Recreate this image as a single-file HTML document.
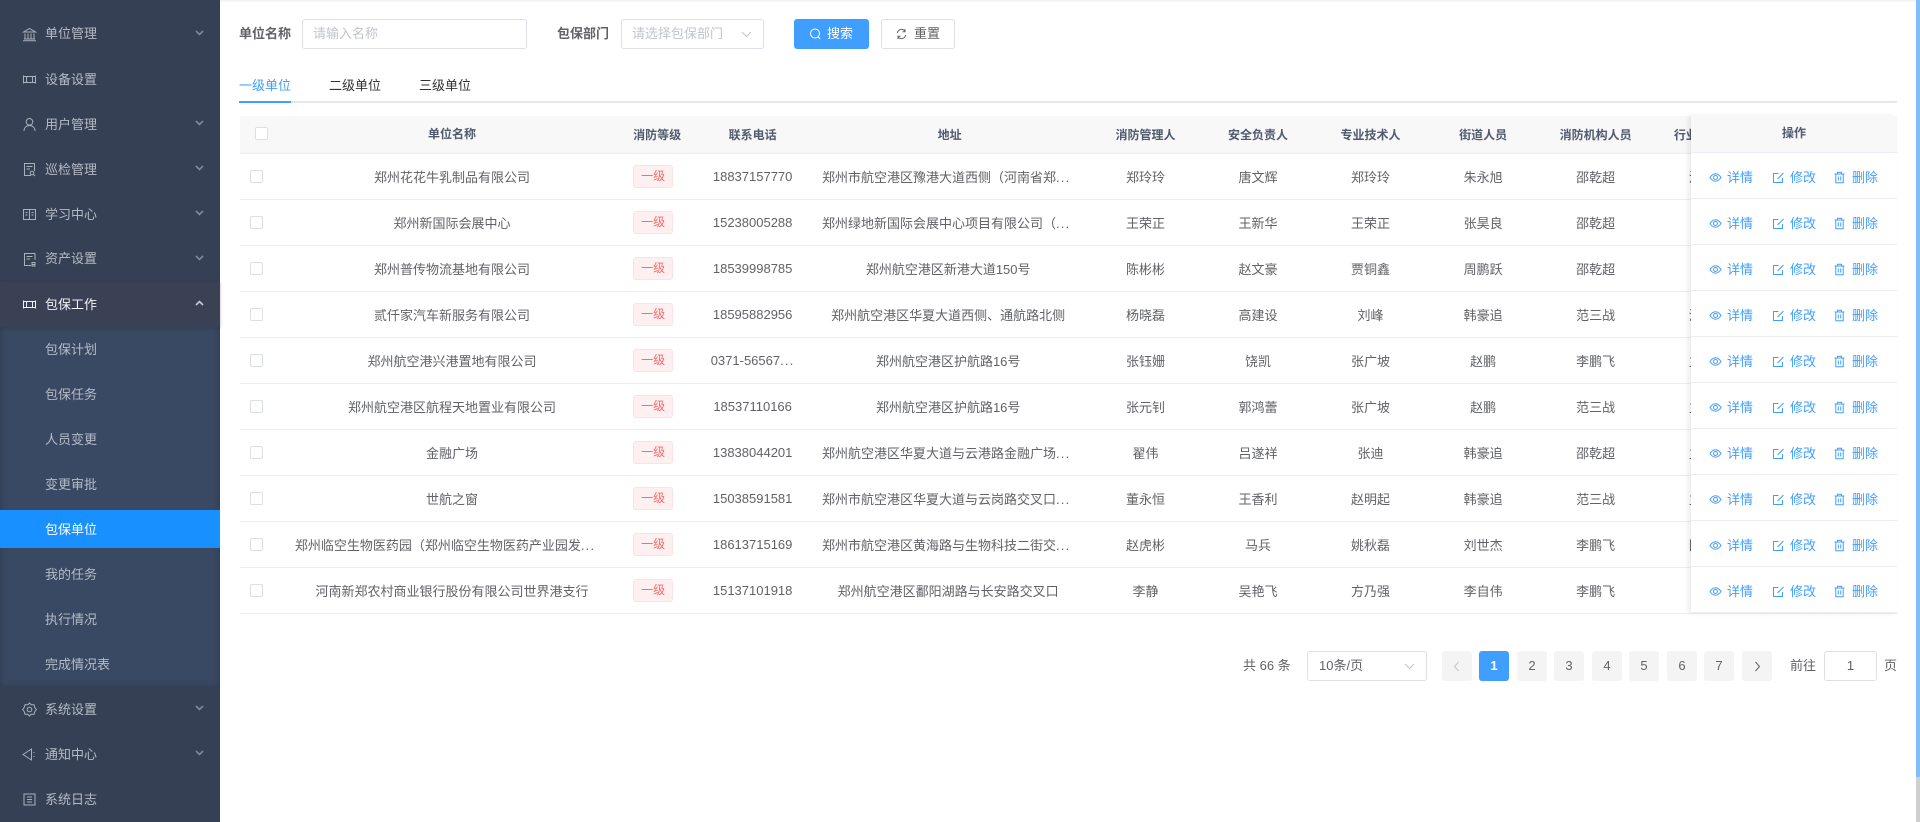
<!DOCTYPE html>
<html lang="zh"><head><meta charset="utf-8"><title>包保单位</title>
<style>
*{box-sizing:border-box;margin:0;padding:0}
html,body{width:1920px;height:822px;overflow:hidden;background:#fff;font-family:"Liberation Sans","Noto Sans CJK SC",sans-serif;font-size:13px;color:#606266;text-spacing-trim:space-all}
.abs,.m,.s{position:absolute}
#side{position:absolute;left:0;top:0;width:220px;height:822px;background:#364054}
#sub{position:absolute;left:0;top:327px;width:220px;height:360px;background:#3a4963;box-shadow:inset 0 0 7px rgba(20,25,40,.35)}
#cur{position:absolute;left:0;top:282px;width:220px;height:45px;background:#3a4154;box-shadow:0 1px 3px rgba(20,25,40,.3)}
#act{position:absolute;left:0;top:510px;width:220px;height:38px;background:#1890ff}
.m,.s{left:45px;height:20px;line-height:20px;color:#b4bbc6;font-size:13px;white-space:nowrap;margin-top:1px}
.ic{position:absolute;left:22px;width:15px;height:15px;fill:none;stroke:#a9b1bd;stroke-width:1}
.ch{position:absolute;left:195px;width:9px;height:6px;fill:none;stroke:#7f8898;stroke-width:1.6}
#top{position:absolute;left:220px;top:0;width:1696px;height:3px;background:linear-gradient(#f1f1f1,#fff)}
.lb{position:absolute;top:24px;height:20px;line-height:20px;font-weight:700;color:#606266}
.inp{position:absolute;top:19px;height:30px;border:1px solid #dcdfe6;border-radius:3px;background:#fff;line-height:28px;color:#c0c4cc;padding-left:10px}
.btn{position:absolute;top:19px;height:30px;border-radius:3px;line-height:28px}
.tab{position:absolute;top:76px;height:20px;line-height:20px;color:#303133;white-space:nowrap}
table{position:absolute;left:240px;top:116px;width:1657px;border-collapse:collapse;table-layout:fixed}
th{height:37px;background:#f8f8f9;font-size:12px;font-weight:700;color:#515a6e;text-align:center;border-bottom:1px solid #ebeef5;white-space:nowrap;overflow:hidden;padding:0}
td{height:46px;text-align:center;border-bottom:1px solid #ebeef5;white-space:nowrap;overflow:hidden;padding:0;color:#606266}
td.ad{padding-right:7px}
td.ad3{padding-right:3px}
td.nm{padding-right:14px}
b{font-weight:400;letter-spacing:1.2px}
.cb{display:block;width:13px;height:13px;border:1px solid #dcdfe6;border-radius:2px;background:#fff}
.tag{display:inline-block;width:40px;height:23px;line-height:21px;border:1px solid #fde2e2;background:#fef0f0;color:#f56c6c;border-radius:3px;font-size:12px;margin-left:-6px}
#fx{position:absolute;left:1691px;top:116px;width:206px;height:497px;background:#fff;box-shadow:-3px 0 5px rgba(0,0,0,.08)}
#fxh{height:37px;line-height:34px;text-align:center;background:#f8f8f9;font-size:12px;font-weight:700;color:#515a6e;border-bottom:1px solid #ebeef5}
.r{position:relative;height:46px;border-bottom:1px solid #ebeef5;color:#409eff}
.r span{position:absolute;top:16px;height:18px;line-height:18px;white-space:nowrap}
.r svg{position:absolute;top:18px;width:13px;height:13px;fill:none;stroke:#409eff;stroke-width:1}
.pg{position:absolute;top:651px;width:30px;height:30px;line-height:30px;text-align:center;background:#f4f4f5;border-radius:3px;color:#606266}
.pt{position:absolute;top:656px;height:20px;line-height:20px;color:#606266;white-space:nowrap}
</style></head><body>
<svg width="0" height="0" style="position:absolute">
<symbol id="eye" viewBox="0 0 13 13"><path d="M1 6.500C3 3.500 4.600 2.800 6.500 2.800S10 3.500 12 6.500C10 9.500 8.400 10.200 6.500 10.200S3 9.500 1 6.500Z"/><circle cx="6.500" cy="6.500" r="2"/></symbol>
<symbol id="edit" viewBox="0 0 13 13"><path d="M10.500 7V11.500H1.500V2.500H6.500"/><path d="M5.500 8L11.500 2"/></symbol>
<symbol id="del" viewBox="0 0 13 13"><path d="M1.500 3H11.500M4.500 3V1.200H8.500V3M2.800 3V11.800H10.200V3M5.300 5.500V9.500M7.700 5.500V9.500"/></symbol>
</svg>
<div id="top"></div>
<div id="side">
<div id="cur"></div><div id="sub"></div><div id="act"></div>
<svg class="ic" style="top:27px" viewBox="0 0 15 15"><path d="M1.500 5L7.500 1.500L13.500 5ZM3 6.500V11.500M6 6.500V11.500M9 6.500V11.500M12 6.500V11.500M2 12H13M1 13.800H14"/></svg>
<div class="m" style="top:23px">单位管理</div><svg class="ch" style="top:30px" viewBox="0 0 9 6"><path d="M1 1L4.500 4.500L8 1"/></svg>
<svg class="ic" style="top:72px" viewBox="0 0 15 15"><path d="M1.500 3.500V11.500M13.500 3.500V11.500M1.500 4.500H13.500M1.500 10.500H13.500M4.500 4.500V10.500M10.500 4.500V10.500"/></svg>
<div class="m" style="top:69px">设备设置</div>
<svg class="ic" style="top:117px" viewBox="0 0 15 15"><circle cx="7.500" cy="4.800" r="3.300"/><path d="M2 14C2 10.500 4.500 8.500 7.500 8.500S13 10.500 13 14"/></svg>
<div class="m" style="top:114px">用户管理</div><svg class="ch" style="top:120px" viewBox="0 0 9 6"><path d="M1 1L4.500 4.500L8 1"/></svg>
<svg class="ic" style="top:162px" viewBox="0 0 15 15"><path d="M9 13.500H2.500V1.500H12.500V9M4.500 4.500H10.500M4.500 7H8"/><circle cx="10" cy="11" r="1.800"/><path d="M11.300 12.300L13 14"/></svg>
<div class="m" style="top:159px">巡检管理</div><svg class="ch" style="top:165px" viewBox="0 0 9 6"><path d="M1 1L4.500 4.500L8 1"/></svg>
<svg class="ic" style="top:207px" viewBox="0 0 15 15"><path d="M1.500 2.500H13.500V12.500H1.500ZM7.500 2.500V12.500M3.500 5.500H5.500M3.500 8H5.500M9.500 5.500H11.500M9.500 8H11.500"/></svg>
<div class="m" style="top:204px">学习中心</div><svg class="ch" style="top:210px" viewBox="0 0 9 6"><path d="M1 1L4.500 4.500L8 1"/></svg>
<svg class="ic" style="top:252px" viewBox="0 0 15 15"><path d="M13 8V1.500H2.500V13.500H9M4.500 4.500H10.500M4.500 7H8"/><path d="M9.500 12.500L13.500 12.500M10 10.500H13V14H10Z"/></svg>
<div class="m" style="top:248px">资产设置</div><svg class="ch" style="top:255px" viewBox="0 0 9 6"><path d="M1 1L4.500 4.500L8 1"/></svg>
<svg class="ic" style="top:297px;stroke:#eef0f3" viewBox="0 0 15 15"><path d="M1.500 3.500V11.500M13.500 3.500V11.500M1.500 4.500H13.500M1.500 10.500H13.500M4.500 4.500V10.500M10.500 4.500V10.500"/></svg>
<div class="m" style="top:294px;color:#f2f3f5">包保工作</div><svg class="ch" style="top:300px;stroke:#c6cbd3" viewBox="0 0 9 6"><path d="M1 5L4.500 1.500L8 5"/></svg>
<div class="s" style="top:339px">包保计划</div>
<div class="s" style="top:384px">包保任务</div>
<div class="s" style="top:429px">人员变更</div>
<div class="s" style="top:474px">变更审批</div>
<div class="s" style="top:519px;color:#fff">包保单位</div>
<div class="s" style="top:564px">我的任务</div>
<div class="s" style="top:609px">执行情况</div>
<div class="s" style="top:654px">完成情况表</div>
<svg class="ic" style="top:702px" viewBox="0 0 15 15"><path d="M7.500 1L9.200 2.700H12L12.700 5.300L14.300 7.500L12.700 9.700L12 12.300H9.200L7.500 14L5.800 12.300H3L2.300 9.700L.7 7.500L2.300 5.300L3 2.700H5.800Z"/><circle cx="7.500" cy="7.500" r="2.300"/></svg>
<div class="m" style="top:699px">系统设置</div><svg class="ch" style="top:705px" viewBox="0 0 9 6"><path d="M1 1L4.500 4.500L8 1"/></svg>
<svg class="ic" style="top:747px" viewBox="0 0 15 15"><path d="M1 7.500L9.500 2V13ZM12 5V6M12 9V10"/></svg>
<div class="m" style="top:744px">通知中心</div><svg class="ch" style="top:750px" viewBox="0 0 9 6"><path d="M1 1L4.500 4.500L8 1"/></svg>
<svg class="ic" style="top:792px" viewBox="0 0 15 15"><path d="M2 2H13V13H2ZM5 5H10M5 7.500H10M5 10H10"/></svg>
<div class="m" style="top:789px">系统日志</div>
</div>

<div class="lb" style="left:239px">单位名称</div>
<div class="inp" style="left:302px;width:225px">请输入名称</div>
<div class="lb" style="left:557px">包保部门</div>
<div class="inp" style="left:621px;width:143px">请选择包保部门</div>
<svg class="abs" style="left:741px;top:31px" width="11" height="7" viewBox="0 0 11 7" fill="none" stroke="#c0c4cc"><path d="M1 1L5.500 5.500L10 1"/></svg>
<div class="btn" style="left:794px;width:75px;background:#409eff;color:#fff;border:1px solid #409eff"></div>
<svg class="abs" style="left:809px;top:27px" width="13" height="14" viewBox="0 0 13 14" fill="none" stroke="#fff"><circle cx="6" cy="6.500" r="4.500"/><path d="M9.300 10L11 12"/></svg>
<div class="abs" style="left:827px;top:24px;height:20px;line-height:20px;color:#fff">搜索</div>
<div class="btn" style="left:881px;width:74px;background:#fff;border:1px solid #dcdfe6"></div>
<svg class="abs" style="left:895px;top:27px" width="13" height="14" viewBox="0 0 13 14" fill="none" stroke="#606266"><path d="M2.500 6A4 4 0 0 1 10 4.500M10.500 8A4 4 0 0 1 3 9.500M10 2V4.800H7.500M3 12V9.200H5.500"/></svg>
<div class="abs" style="left:914px;top:24px;height:20px;line-height:20px;color:#606266">重置</div>

<div class="tab" style="left:239px;color:#409eff">一级单位</div>
<div class="tab" style="left:329px">二级单位</div>
<div class="tab" style="left:419px">三级单位</div>
<div class="abs" style="left:239px;top:101px;width:1658px;height:2px;background:#e4e7ed"></div>
<div class="abs" style="left:239px;top:101px;width:52px;height:2px;background:#409eff"></div>

<table>
<colgroup><col style="width:47px"><col style="width:330px"><col style="width:78px"><col style="width:115px"><col style="width:279px"><col style="width:112.500px"><col style="width:112.500px"><col style="width:112.500px"><col style="width:112.500px"><col style="width:112.500px"><col style="width:245px"></colgroup>
<tr><th><i class="cb" style="margin-left:15px;margin-top:-1px"></i></th><th style="padding-bottom:2px">单位名称</th><th style="padding-left:2px">消防等级</th><th>联系电话</th><th>地址</th><th>消防管理人</th><th>安全负责人</th><th>专业技术人</th><th>街道人员</th><th>消防机构人员</th><th style="text-align:left;padding-left:22px">行业类型</th></tr>
<tr><td><i class="cb" style="margin-left:10px"></i></td><td>郑州花花牛乳制品有限公司</td><td><span class="tag">一级</span></td><td>18837157770</td><td class="ad">郑州市航空港区豫港大道西侧（河南省郑<b>...</b></td><td>郑玲玲</td><td>唐文辉</td><td>郑玲玲</td><td>朱永旭</td><td>邵乾超</td><td style="text-align:left;padding-left:37px">港区</td></tr>
<tr><td><i class="cb" style="margin-left:10px"></i></td><td>郑州新国际会展中心</td><td><span class="tag">一级</span></td><td>15238005288</td><td class="ad">郑州绿地新国际会展中心项目有限公司（<b>...</b></td><td>王荣正</td><td>王新华</td><td>王荣正</td><td>张昊良</td><td>邵乾超</td><td></td></tr>
<tr><td><i class="cb" style="margin-left:10px"></i></td><td>郑州普传物流基地有限公司</td><td><span class="tag">一级</span></td><td>18539998785</td><td class="ad3">郑州航空港区新港大道150号</td><td>陈彬彬</td><td>赵文豪</td><td>贾铜鑫</td><td>周鹏跃</td><td>邵乾超</td><td></td></tr>
<tr><td><i class="cb" style="margin-left:10px"></i></td><td>贰仟家汽车新服务有限公司</td><td><span class="tag">一级</span></td><td>18595882956</td><td class="ad3">郑州航空港区华夏大道西侧、通航路北侧</td><td>杨晓磊</td><td>高建设</td><td>刘峰</td><td>韩豪追</td><td>范三战</td><td style="text-align:left;padding-left:37px">港区</td></tr>
<tr><td><i class="cb" style="margin-left:10px"></i></td><td>郑州航空港兴港置地有限公司</td><td><span class="tag">一级</span></td><td>0371-56567<b>...</b></td><td class="ad3">郑州航空港区护航路16号</td><td>张钰姗</td><td>饶凯</td><td>张广坡</td><td>赵鹏</td><td>李鹏飞</td><td style="text-align:left;padding-left:37px">主要</td></tr>
<tr><td><i class="cb" style="margin-left:10px"></i></td><td>郑州航空港区航程天地置业有限公司</td><td><span class="tag">一级</span></td><td>18537110166</td><td class="ad3">郑州航空港区护航路16号</td><td>张元钊</td><td>郭鸿蕾</td><td>张广坡</td><td>赵鹏</td><td>范三战</td><td style="text-align:left;padding-left:37px">主要</td></tr>
<tr><td><i class="cb" style="margin-left:10px"></i></td><td>金融广场</td><td><span class="tag">一级</span></td><td>13838044201</td><td class="ad">郑州航空港区华夏大道与云港路金融广场<b>...</b></td><td>翟伟</td><td>吕遂祥</td><td>张迪</td><td>韩豪追</td><td>邵乾超</td><td style="text-align:left;padding-left:37px">主要</td></tr>
<tr><td><i class="cb" style="margin-left:10px"></i></td><td>世航之窗</td><td><span class="tag">一级</span></td><td>15038591581</td><td class="ad">郑州市航空港区华夏大道与云岗路交叉口<b>...</b></td><td>董永恒</td><td>王香利</td><td>赵明起</td><td>韩豪追</td><td>范三战</td><td style="text-align:left;padding-left:37px">主要</td></tr>
<tr><td><i class="cb" style="margin-left:10px"></i></td><td class="nm">郑州临空生物医药园（郑州临空生物医药产业园发<b>...</b></td><td><span class="tag">一级</span></td><td>18613715169</td><td class="ad">郑州市航空港区黄海路与生物科技二街交<b>...</b></td><td>赵虎彬</td><td>马兵</td><td>姚秋磊</td><td>刘世杰</td><td>李鹏飞</td><td style="text-align:left;padding-left:37px">园区</td></tr>
<tr><td><i class="cb" style="margin-left:10px"></i></td><td>河南新郑农村商业银行股份有限公司世界港支行</td><td><span class="tag">一级</span></td><td>15137101918</td><td class="ad3">郑州航空港区鄱阳湖路与长安路交叉口</td><td>李静</td><td>吴艳飞</td><td>方乃强</td><td>李自伟</td><td>李鹏飞</td><td></td></tr>
</table>

<div id="fx">
<div id="fxh">操作</div>
<div class="r"><svg style="left:18px"><use href="#eye"/></svg><span style="left:36px">详情</span><svg style="left:81px"><use href="#edit"/></svg><span style="left:99px">修改</span><svg style="left:142px"><use href="#del"/></svg><span style="left:161px">删除</span></div>
<div class="r"><svg style="left:18px"><use href="#eye"/></svg><span style="left:36px">详情</span><svg style="left:81px"><use href="#edit"/></svg><span style="left:99px">修改</span><svg style="left:142px"><use href="#del"/></svg><span style="left:161px">删除</span></div>
<div class="r"><svg style="left:18px"><use href="#eye"/></svg><span style="left:36px">详情</span><svg style="left:81px"><use href="#edit"/></svg><span style="left:99px">修改</span><svg style="left:142px"><use href="#del"/></svg><span style="left:161px">删除</span></div>
<div class="r"><svg style="left:18px"><use href="#eye"/></svg><span style="left:36px">详情</span><svg style="left:81px"><use href="#edit"/></svg><span style="left:99px">修改</span><svg style="left:142px"><use href="#del"/></svg><span style="left:161px">删除</span></div>
<div class="r"><svg style="left:18px"><use href="#eye"/></svg><span style="left:36px">详情</span><svg style="left:81px"><use href="#edit"/></svg><span style="left:99px">修改</span><svg style="left:142px"><use href="#del"/></svg><span style="left:161px">删除</span></div>
<div class="r"><svg style="left:18px"><use href="#eye"/></svg><span style="left:36px">详情</span><svg style="left:81px"><use href="#edit"/></svg><span style="left:99px">修改</span><svg style="left:142px"><use href="#del"/></svg><span style="left:161px">删除</span></div>
<div class="r"><svg style="left:18px"><use href="#eye"/></svg><span style="left:36px">详情</span><svg style="left:81px"><use href="#edit"/></svg><span style="left:99px">修改</span><svg style="left:142px"><use href="#del"/></svg><span style="left:161px">删除</span></div>
<div class="r"><svg style="left:18px"><use href="#eye"/></svg><span style="left:36px">详情</span><svg style="left:81px"><use href="#edit"/></svg><span style="left:99px">修改</span><svg style="left:142px"><use href="#del"/></svg><span style="left:161px">删除</span></div>
<div class="r"><svg style="left:18px"><use href="#eye"/></svg><span style="left:36px">详情</span><svg style="left:81px"><use href="#edit"/></svg><span style="left:99px">修改</span><svg style="left:142px"><use href="#del"/></svg><span style="left:161px">删除</span></div>
<div class="r"><svg style="left:18px"><use href="#eye"/></svg><span style="left:36px">详情</span><svg style="left:81px"><use href="#edit"/></svg><span style="left:99px">修改</span><svg style="left:142px"><use href="#del"/></svg><span style="left:161px">删除</span></div>
</div>

<div class="pt" style="left:1243px">共 66 条</div>
<div class="abs" style="left:1307px;top:651px;width:120px;height:30px;border:1px solid #dcdfe6;border-radius:3px;line-height:27px;padding-left:11px;color:#606266">10条/页</div>
<svg class="abs" style="left:1404px;top:663px" width="11" height="7" viewBox="0 0 11 7" fill="none" stroke="#c0c4cc"><path d="M1 1L5.500 5.500L10 1"/></svg>
<div class="pg" style="left:1442px"></div>
<svg class="abs" style="left:1453px;top:661px" width="7" height="11" viewBox="0 0 7 11" fill="none" stroke="#c0c4cc"><path d="M5.500 1L1.500 5.500L5.500 10"/></svg>
<div class="pg" style="left:1479px;background:#409eff;color:#fff;font-weight:700">1</div>
<div class="pg" style="left:1517px">2</div>
<div class="pg" style="left:1554px">3</div>
<div class="pg" style="left:1592px">4</div>
<div class="pg" style="left:1629px">5</div>
<div class="pg" style="left:1667px">6</div>
<div class="pg" style="left:1704px">7</div>
<div class="pg" style="left:1742px"></div>
<svg class="abs" style="left:1754px;top:661px" width="7" height="11" viewBox="0 0 7 11" fill="none" stroke="#606266"><path d="M1.500 1L5.500 5.500L1.500 10"/></svg>
<div class="pt" style="left:1790px">前往</div>
<div class="abs" style="left:1824px;top:651px;width:53px;height:30px;border:1px solid #dcdfe6;border-radius:3px;line-height:28px;text-align:center;color:#606266">1</div>
<div class="pt" style="left:1884px">页</div>

<div class="abs" style="left:1916px;top:0;width:4px;height:777px;background:#7fbff5"></div>
<div class="abs" style="left:1916px;top:777px;width:4px;height:45px;background:#cfcfcf"></div>
</body></html>
